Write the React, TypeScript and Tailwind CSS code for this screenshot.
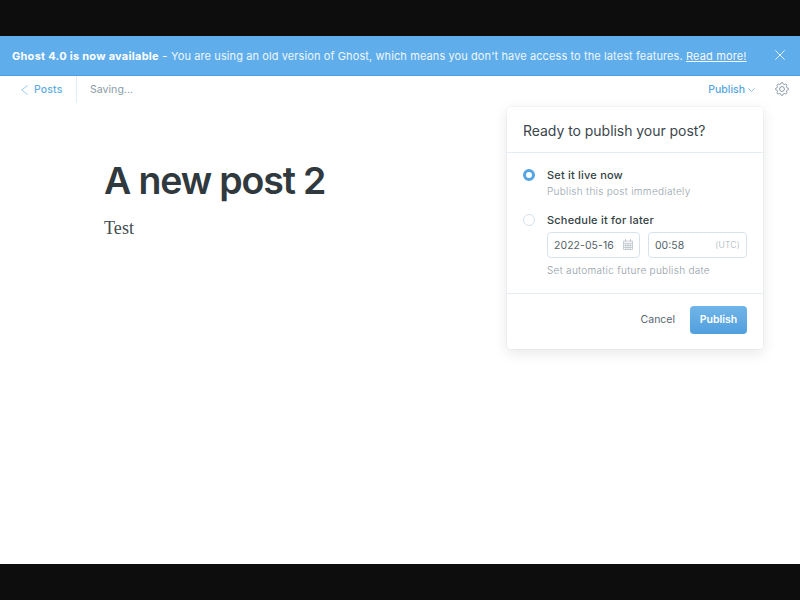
import React from "react";

function Banner() {
  return (
    <div className="flex h-10 shrink-0 items-center justify-between border-b border-[#4a9de6] bg-[#5fadea] pr-[15px] pl-3 text-white">
      <p className="text-[11px] leading-4 tracking-[0.1px] whitespace-nowrap">
        <b className="font-bold tracking-[0.26px]">Ghost 4.0 is now available</b>
        <b className="font-medium tracking-[0.4px]"> - </b>
        <span className="text-white/90">
          You are using an old version of Ghost, which means you don't have access to the latest features.{" "}
        </span>
        <a className="tracking-[0.15px] text-white/95 underline underline-offset-1">Read more!</a>
      </p>
      <svg className="mb-px h-[10px] w-[10px]" viewBox="0 0 10 10" fill="none" stroke="#fff" strokeWidth="0.9" strokeOpacity="0.9">
        <path d="M0.3 0.3 9.7 9.7M9.7 0.3 0.3 9.7" />
      </svg>
    </div>
  );
}

function Gear() {
  return (
    <svg className="mb-0.5 h-[14px] w-[14px]" viewBox="0 0 24 24" fill="none" stroke="#7c8b9a" strokeWidth="1.5" strokeLinejoin="round">
      <circle cx="12" cy="12" r="4.2" />
      <path d="M9.7 3.2Q10 1 12 1T14.3 3.2Q14.8 5.2 16.6 4.1Q18.5 2.9 19.8 4.2T19.9 7.4Q18.8 9.2 20.8 9.7Q23 10 23 12T20.8 14.3Q18.8 14.8 19.9 16.6Q21.1 18.5 19.8 19.8T16.6 19.9Q14.8 18.8 14.3 20.8Q14 23 12 23T9.7 20.8Q9.2 18.8 7.4 19.9Q5.5 21.1 4.2 19.8T4.1 16.6Q5.2 14.8 3.2 14.3Q1 14 1 12T3.2 9.7Q5.2 9.2 4.1 7.4Q2.9 5.5 4.2 4.2T7.4 4.1Q9.2 5.2 9.7 3.2Z" />
    </svg>
  );
}

function Header() {
  return (
    <header className="flex h-[27px] items-center justify-between pr-[11.5px] pl-[21px] text-[10.5px]">
      <div className="flex h-full items-center">
        <div className="flex h-full items-center border-r border-[#e3edf3] pr-[13px] text-[#62ade5]">
          <svg className="mr-1.5 h-[10px] w-[7px]" viewBox="0 0 7 10" fill="none" stroke="#8dc4ec" strokeWidth="0.9">
            <path d="M6.6 0.4 0.8 5 6.6 9.6" />
          </svg>
          <span className="w-[29px] font-medium tracking-[0.15px]">Posts</span>
        </div>
        <span className="pl-[13px] tracking-[0.05px] text-[#8b9aa6]">Saving...</span>
      </div>
      <div className="flex items-center">
        <span className="font-medium text-[#55a5e2]">Publish</span>
        <svg className="mr-[19.5px] ml-[3px] h-1 w-[7px]" viewBox="0 0 7 4" fill="none" stroke="#6fb2e4" strokeWidth="0.8">
          <path d="M0.3 0.3 3.5 3.5 6.7 0.3" />
        </svg>
        <Gear />
      </div>
    </header>
  );
}

function CalendarIcon() {
  return (
    <svg className="mb-px h-[11px] w-[10px]" viewBox="0 0 10 11" fill="none" stroke="#b2bdc5" strokeWidth="0.7">
      <path d="M0.5 2h9v8.5h-9zM0.5 4.3h9M0.5 6.4h9M0.5 8.5h9M2.8 4.3v6.2M5 4.3v6.2M7.2 4.3v6.2M2.5 0v3M7.5 0v3" />
    </svg>
  );
}

function PublishMenu() {
  return (
    <section className="absolute top-[107px] left-[507px] flex h-[242px] w-64 flex-col rounded bg-white shadow-[0_0_0_1px_rgba(99,114,130,0.04),0_4px_14px_rgba(27,39,51,0.11)]">
      <h2 className="flex h-[46px] items-center border-b border-[#e3edf3] px-4 pt-px text-[14px] tracking-[-0.04px] text-[#3b464c]">
        Ready to publish your post?
      </h2>
      <div className="h-[141px] border-b border-[#e3edf3] px-4 pt-[14px]">
        <div className="flex h-[45px] gap-3">
          <span className="mt-0.5 h-3 w-3 shrink-0 rounded-full border-[3px] border-[#55a4e3] bg-white" />
          <div>
            <div className="text-[11px] leading-4 font-medium tracking-[0.2px] text-[#343f44]">Set it live now</div>
            <div className="text-[10px] leading-4 font-light tracking-[0.3px] text-[#98a5ae]">Publish this post immediately</div>
          </div>
        </div>
        <div className="flex gap-3">
          <span className="mt-0.5 h-3 w-3 shrink-0 rounded-full border border-[#d4e2ed] bg-white" />
          <div>
            <div className="text-[11px] leading-4 font-medium tracking-[0.2px] text-[#343f44]">Schedule it for later</div>
            <div className="mt-1 flex gap-2 text-[10.5px] text-[#535f67]">
              <div className="flex h-[26px] w-[93px] items-center justify-between rounded-sm border border-[#d7e3ec] px-1.5">
                <span className="pt-px tracking-[0.05px]">2022-05-16</span>
                <CalendarIcon />
              </div>
              <div className="flex h-[26px] w-[99px] items-center justify-between rounded-sm border border-[#d7e3ec] px-1.5">
                <span className="pt-px">00:58</span>
                <span className="text-[8.5px] font-light tracking-[0.25px] text-[#a9b4bc]">(UTC)</span>
              </div>
            </div>
            <div className="mt-1 text-[10px] leading-4 font-light tracking-[0.3px] text-[#909da6]">Set automatic future publish date</div>
          </div>
        </div>
      </div>
      <div className="flex items-center justify-end pt-3 pr-4 text-[10.5px]">
        <span className="mr-[15px] pb-px text-[#586670]">Cancel</span>
        <button className="flex h-7 w-[57px] items-center justify-center rounded bg-linear-to-b from-[#70b5e9] to-[#519fdd] pb-px font-semibold text-white">
          Publish
        </button>
      </div>
    </section>
  );
}

export default function App() {
  return (
    <div className="relative flex h-[600px] w-[800px] flex-col overflow-hidden bg-[#0d0d0d] py-9 font-['Inter',sans-serif]">
      <Banner />
      <div className="flex-1 bg-white">
        <Header />
        <main className="pt-[54px] pl-[104px] text-[#30393e]">
          <h1 className="text-[37.5px] leading-[48px] font-semibold tracking-[-1.15px]">A new post 2</h1>
          <p className="mt-[11px] font-['Liberation_Serif',serif] text-[18px] leading-6 tracking-[0.1px] text-[#424c51]">Test</p>
        </main>
      </div>
      <PublishMenu />
    </div>
  );
}
